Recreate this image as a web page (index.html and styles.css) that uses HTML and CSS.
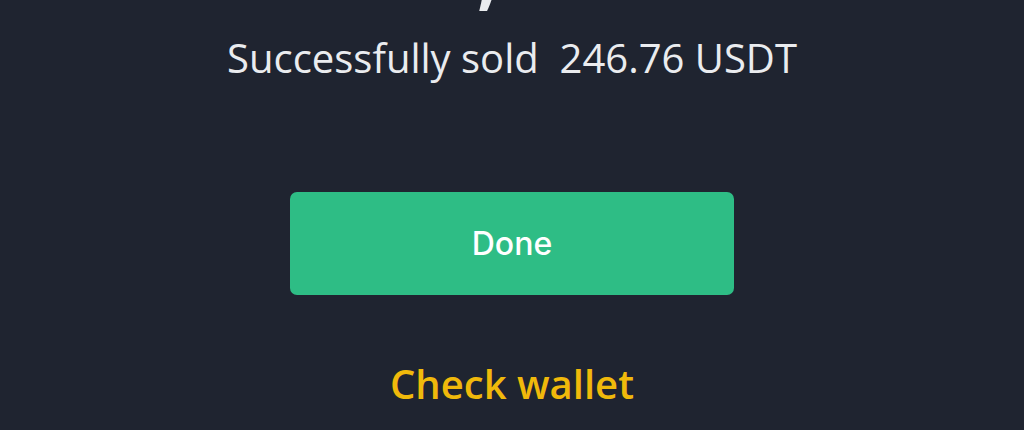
FILE: index.html
```html
<!DOCTYPE html>
<html>
<head>
<meta charset="utf-8">
<link rel="stylesheet" href="styles.css">
</head>
<body>
<main class="screen">
  <div class="amount-clip"><div class="amount">30,620.00</div></div>
  <p class="message">Successfully sold&nbsp; 246.76 USDT</p>
  <button class="done">Done</button>
  <a class="wallet">Check wallet</a>
</main>
</body>
</html>
```
FILE: styles.css
```css
html, body {
  margin: 0;
  padding: 0;
  background: #1f2430;
}
.screen {
  width: 1024px;
  height: 430px;
  overflow: hidden;
  display: flex;
  flex-direction: column;
  align-items: center;
  font-family: "Open Sans", "Liberation Sans", sans-serif;
}
.amount-clip {
  height: 18px;
  overflow: hidden;
  display: flex;
  justify-content: center;
  width: 100%;
  box-sizing: border-box;
  padding-left: 136px;
}
.amount {
  font-size: 92px;
  line-height: 92px;
  margin-top: -82px;
  color: #eaecef;
  font-weight: 600;
}
.message {
  margin: 15px 0 0;
  font-size: 40px;
  line-height: 50px;
  color: #eaecef;
}
.done {
  margin-top: 109px;
  width: 444px;
  height: 103px;
  flex-shrink: 0;
  border: none;
  border-radius: 7px;
  background: #2ebd85;
  color: #ffffff;
  font-family: "Inter", "Open Sans", sans-serif;
  font-size: 32px;
  font-weight: 500;
}
.wallet {
  margin-top: 64px;
  font-size: 40px;
  line-height: 50px;
  font-weight: 600;
  color: #f0b90b;
}
```
